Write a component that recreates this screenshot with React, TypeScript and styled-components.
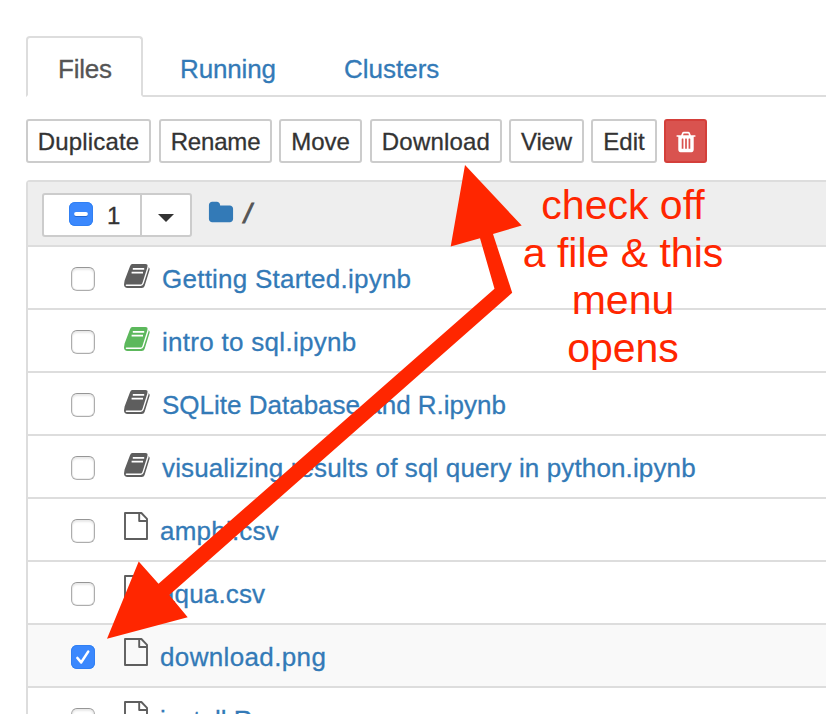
import React from "react";
import styled, { createGlobalStyle } from "styled-components";

const GlobalStyle = createGlobalStyle`
  * { box-sizing: border-box; }
  html, body { margin: 0; background: #fff; overflow: hidden; }
  body { font-family: "Liberation Sans", Arial, sans-serif; font-size: 26px; color: #333; }
`;

const Page = styled.main`
  position: relative;
  width: 826px;
  height: 714px;
  padding: 36px 0 0 26px;
  overflow: hidden;
`;

const Tabs = styled.nav`
  display: flex;
  height: 61px;
  border-bottom: 2px solid #ddd;
`;

const Tab = styled.a<{ $active?: boolean; $width: number; $spacing?: number }>`
  flex: none;
  width: ${(p) => p.$width}px;
  height: 61px;
  padding-left: 30px;
  line-height: 63px;
  letter-spacing: ${(p) => p.$spacing ?? 0}px;
  border: 2px solid ${(p) => (p.$active ? "#ddd" : "transparent")};
  border-bottom-color: ${(p) => (p.$active ? "#fff" : "transparent")};
  border-radius: 4px 4px 0 0;
  margin-right: 5px;
  color: ${(p) => (p.$active ? "#555" : "#337ab7")};
  -webkit-text-stroke: 0.3px;
`;

const Toolbar = styled.div`
  display: grid;
  grid-template-columns: 133px 120px 91px 139px 82px 73px 43px;
  margin-top: 22px;
  height: 44px;
`;

const Button = styled.button<{ $width: number; $spacing?: number; $danger?: boolean }>`
  display: flex;
  align-items: center;
  justify-content: center;
  width: ${(p) => p.$width}px;
  height: 44px;
  padding: 2px 0 0;
  font: 24px "Liberation Sans", Arial, sans-serif;
  letter-spacing: ${(p) => p.$spacing ?? 0}px;
  white-space: nowrap;
  color: ${(p) => (p.$danger ? "#fff" : "#333")};
  background: ${(p) => (p.$danger ? "#d9534f" : "#fff")};
  border: 2px solid ${(p) => (p.$danger ? "#d43f3a" : "#ccc")};
  border-radius: 3px;
  -webkit-text-stroke: 0.3px;
`;

const FileList = styled.section`
  margin-top: 17px;
  width: 820px;
  border: 2px solid #ddd;
  border-radius: 4px 0 0 0;
`;

const ListHeader = styled.header`
  display: flex;
  height: 65px;
  padding: 11px 0 0 14px;
  background: #eee;
  border-bottom: 2px solid #ddd;
`;

const SelectGroup = styled.div`
  display: flex;
  width: 150px;
  height: 44px;
  background: #fff;
  border: 2px solid #ccc;
  border-radius: 3px;
`;

const SelectCount = styled.div`
  display: flex;
  width: 98px;
  padding: 7px 0 0 25px;
  gap: 14px;
  font-size: 24px;
  line-height: 28px;
  border-right: 2px solid #ccc;
  -webkit-text-stroke: 0.3px;
`;

const SelectToggle = styled.div`
  display: flex;
  flex: 1;
  justify-content: center;
  padding-top: 19px;
`;

const Caret = styled.span`
  width: 16px;
  height: 8px;
  border: 8px solid transparent;
  border-top-color: #333;
  border-bottom: 0;
`;

const Breadcrumb = styled.div`
  display: flex;
  margin-left: 16px;
  padding-top: 7px;
  gap: 10px;
  color: #555;
`;

const Slash = styled.span`
  font-size: 27px;
  font-style: italic;
  line-height: 29px;
  -webkit-text-stroke: 1px;
`;

const Row = styled.div<{ $selected?: boolean }>`
  display: flex;
  height: 63px;
  padding-left: 43px;
  background: ${(p) => (p.$selected ? "#f9f9f9" : "#fff")};
  border-bottom: 2px solid #ddd;
`;

const Checkbox = styled.span<{ $on?: boolean }>`
  display: flex;
  flex: none;
  width: 24px;
  height: 24px;
  border-radius: 6px;
  border: ${(p) => (p.$on ? "0" : "1px solid #adadad")};
  border-top-color: #969696;
  background: ${(p) => (p.$on ? "#3b88fd" : "#fff")};
  box-shadow: ${(p) => (p.$on ? "inset 0 0 0 1px #3180f3" : "inset 0 2px 2px #e9e9e9, inset 0 0 0 1px #eee")};
`;

const RowCheck = styled.div`
  width: 24px;
  padding-top: 20px;
`;

const IconCell = styled.div<{ $file?: boolean }>`
  display: flex;
  flex: none;
  width: ${(p) => (p.$file ? 36 : 38)}px;
  margin-left: 29px;
  padding-top: ${(p) => (p.$file ? 13 : 17)}px;
`;

const FileName = styled.a<{ $spacing: number }>`
  line-height: 64px;
  white-space: nowrap;
  letter-spacing: ${(p) => p.$spacing}px;
  color: #337ab7;
  -webkit-text-stroke: 0.3px;
`;

const Arrow = styled.svg`
  position: absolute;
  inset: 0;
`;

const Note = styled.div`
  position: absolute;
  left: 503px;
  top: 182px;
  width: 240px;
  font-size: 41px;
  line-height: 47.7px;
  text-align: center;
  white-space: pre-line;
  color: #ff2600;
`;

const GLYPHS = {
  folder: "M1728 608v704q0 92-66 158t-158 66h-1216q-92 0-158-66t-66-158v-960q0-92 66-158t158-66h320q92 0 158 66t66 158v32h672q92 0 158 66t66 158z",
  trash: "M704 1376v-704q0-14-9-23t-23-9h-64q-14 0-23 9t-9 23v704q0 14 9 23t23 9h64q14 0 23-9t9-23zm256 0v-704q0-14-9-23t-23-9h-64q-14 0-23 9t-9 23v704q0 14 9 23t23 9h64q14 0 23-9t9-23zm256 0v-704q0-14-9-23t-23-9h-64q-14 0-23 9t-9 23v704q0 14 9 23t23 9h64q14 0 23-9t9-23zm-544-992h448l-48-117q-7-9-17-11h-317q-10 2-17 11zm928 32v64q0 14-9 23t-23 9h-96v948q0 83-47 143.5t-113 60.5h-832q-66 0-113-58.5t-47-141.5v-952h-96q-14 0-23-9t-9-23v-64q0-14 9-23t23-9h309l70-167q15-37 54-63t79-26h320q40 0 79 26t54 63l70 167h309q14 0 23 9t9 23z",
};

function Icon({ name, size, color }: { name: keyof typeof GLYPHS; size: number; color: string }) {
  return (
    <svg width={size} height={size} viewBox="0 0 1792 1792" fill={color} stroke="none">
      <path d={GLYPHS[name]} />
    </svg>
  );
}

function BookIcon({ color }: { color: string }) {
  return (
    <svg width="26" height="24" viewBox="0 0 26 24" fill="none" strokeLinecap="round">
      <path
        fill={color}
        d="M8.3 0 H21.4 Q23.9 0 23.5 2.2 L23.3 3.6 L24.6 3.6 L24.9 3.4 Q26 4.2 25.6 5.8 L20.6 22 Q20 24 17.8 24 H3.6 Q0 23.6 0 20.4 L0.6 16.4 L6 2.2 Q6.8 0 8.3 0 Z"
      />
      <path stroke="#fff" strokeWidth="1.4" d="M2.4 21.3 H16.6 Q18.4 21.3 19 19.4 L24 3.8" />
      <path stroke="#fff" strokeWidth="1.8" strokeLinecap="butt" d="M8.8 4.8 H20.2 M7.6 8.6 H19" />
    </svg>
  );
}

function FileIcon() {
  return (
    <svg width="24" height="28" viewBox="0 0 24 28" fill="none" stroke="#5e5e5e" strokeWidth="1.9" strokeLinejoin="round">
      <path d="M1 1 H17.4 L23 6.8 V27 H1 Z" />
      <path d="M15.2 1 V9 H23" />
    </svg>
  );
}

function Check({ state }: { state: "off" | "on" | "mixed" }) {
  return (
    <Checkbox $on={state !== "off"}>
      {state !== "off" && (
        <svg width="24" height="24" viewBox="0 0 24 24" fill="none" stroke="#fff" strokeLinecap="round" strokeLinejoin="round">
          {state === "on" ? (
            <path d="M6.4 13 L10.2 17.4 L17.2 6.6" strokeWidth="2.6" />
          ) : (
            <>
              <path d="M7 13.2 H17" stroke="#2467d0" strokeWidth="3.6" />
              <path d="M7 12 H17" strokeWidth="3.8" />
            </>
          )}
        </svg>
      )}
    </Checkbox>
  );
}

type Entry = { name: string; kind: "book" | "file"; running?: boolean; selected?: boolean; spacing: number };

const ENTRIES: Entry[] = [
  { name: "Getting Started.ipynb", kind: "book", spacing: 0.24 },
  { name: "intro to sql.ipynb", kind: "book", running: true, spacing: 0.29 },
  { name: "SQLite Database and R.ipynb", kind: "book", spacing: 0 },
  { name: "visualizing results of sql query in python.ipynb", kind: "book", spacing: 0.13 },
  { name: "amphi.csv", kind: "file", spacing: 0.22 },
  { name: "aqua.csv", kind: "file", spacing: 0.14 },
  { name: "download.png", kind: "file", selected: true, spacing: 0.36 },
  { name: "install.R", kind: "file", spacing: 0 },
];

export default function App() {
  return (
    <>
      <GlobalStyle />
      <Page>
        <Tabs>
          <Tab $active $width={117} $spacing={-0.2}>Files</Tab>
          <Tab $width={159} $spacing={-0.15}>Running</Tab>
          <Tab $width={160}>Clusters</Tab>
        </Tabs>
        <Toolbar>
          <Button $width={125} $spacing={0.17}>Duplicate</Button>
          <Button $width={113} $spacing={-0.18}>Rename</Button>
          <Button $width={83}>Move</Button>
          <Button $width={132} $spacing={0.2}>Download</Button>
          <Button $width={75} $spacing={-0.15}>View</Button>
          <Button $width={66}>Edit</Button>
          <Button $width={43} $danger aria-label="Delete">
            <Icon name="trash" size={24} color="#fff" />
          </Button>
        </Toolbar>
        <FileList>
          <ListHeader>
            <SelectGroup>
              <SelectCount>
                <Check state="mixed" />
                <span>1</span>
              </SelectCount>
              <SelectToggle>
                <Caret />
              </SelectToggle>
            </SelectGroup>
            <Breadcrumb>
              <Icon name="folder" size={26} color="#337ab7" />
              <Slash>/</Slash>
            </Breadcrumb>
          </ListHeader>
          {ENTRIES.map((e) => (
            <Row key={e.name} $selected={e.selected}>
              <RowCheck>
                <Check state={e.selected ? "on" : "off"} />
              </RowCheck>
              <IconCell $file={e.kind === "file"}>
                {e.kind === "book" ? <BookIcon color={e.running ? "#5cb85c" : "#5e5e5e"} /> : <FileIcon />}
              </IconCell>
              <FileName $spacing={e.spacing}>{e.name}</FileName>
            </Row>
          ))}
        </FileList>
        <Arrow width="826" height="714" viewBox="0 0 826 714">
          <polygon
            fill="#ff2600"
            points="465,165 521.7,225.5 493,234 512.2,292.7 169.3,595 187.7,617.3 107,638.7 138.7,561.5 158.5,583.8 494.5,288.7 480,238.3 450.7,246.5"
          />
        </Arrow>
        <Note>{"check off\na file & this\nmenu\nopens"}</Note>
      </Page>
    </>
  );
}
